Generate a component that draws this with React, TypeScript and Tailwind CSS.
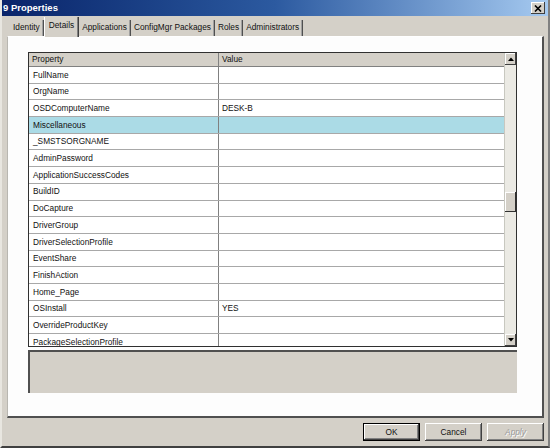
import React from "react";

const rows: [string, string][] = [
  ["FullName", ""],
  ["OrgName", ""],
  ["OSDComputerName", "DESK-B"],
  ["Miscellaneous", ""],
  ["_SMSTSORGNAME", ""],
  ["AdminPassword", ""],
  ["ApplicationSuccessCodes", ""],
  ["BuildID", ""],
  ["DoCapture", ""],
  ["DriverGroup", ""],
  ["DriverSelectionProfile", ""],
  ["EventShare", ""],
  ["FinishAction", ""],
  ["Home_Page", ""],
  ["OSInstall", "YES"],
  ["OverrideProductKey", ""],
  ["PackageSelectionProfile", ""],
];

const tabs = ["Identity", "Details", "Applications", "ConfigMgr Packages", "Roles", "Administrators"];

function Tab({ label, selected }: { label: string; selected: boolean }) {
  if (selected) {
    return (
      <div className="h-[20px] -mb-[1px] px-[4px] flex items-center bg-[#d4d0c8] border-l border-white border-r border-r-[#404040] shadow-[inset_-1px_0_#808080] relative z-10">
        <span className="-mt-[3px]">{label}</span>
      </div>
    );
  }
  return (
    <div className="h-[16px] px-[3px] flex items-center border-r border-r-[#505050] shadow-[inset_-1px_0_#a0a0a0]">
      <span className="-mt-[1px]">{label}</span>
    </div>
  );
}

function Btn({ label, def, disabled }: { label: string; def?: boolean; disabled?: boolean }) {
  return (
    <div
      className={
        "h-[18px] flex items-center justify-center bg-[#d4d0c8] " +
        (def
          ? "w-[57px] border border-black shadow-[inset_-1px_-1px_#404040,inset_1px_1px_#fff,inset_-2px_-2px_#808080]"
          : "w-[57px] shadow-[inset_-1px_-1px_#404040,inset_1px_1px_#fff,inset_-2px_-2px_#808080]")
      }
    >
      <span
        className={
          disabled ? "text-[#9a9a9a] [text-shadow:1px_1px_0_#ffffff] italic" : "text-[#111]"
        }
      >
        {label}
      </span>
    </div>
  );
}

export default function App() {
  return (
    <div
      className="w-[550px] h-[448px] bg-[#d4d0c8] flex flex-col overflow-hidden text-[8.3px] text-[#111] border-b-2 border-b-[#404040] border-r-2 border-r-[#808080] border-l-2 border-l-[#e8e6e0]"
      style={{ fontFamily: '"Liberation Sans", Arial, sans-serif' }}
    >
      {/* Title bar */}
      <div className="h-[16px] shrink-0 flex items-center justify-between pl-[1px] pr-[3px] bg-linear-to-r from-[#0a246a] via-[#2c5aa0] to-[#a6caf0]">
        <span className="text-white font-bold text-[9.5px]">9 Properties</span>
        <div className="w-[14px] h-[12px] bg-[#d4d0c8] flex items-center justify-center shadow-[inset_-1px_-1px_#404040,inset_1px_1px_#fff]">
          <svg width="8" height="7" viewBox="0 0 8 7">
            <path d="M1 0.5 L7 6.5 M7 0.5 L1 6.5" stroke="#000" strokeWidth="1.6" />
          </svg>
        </div>
      </div>

      {/* Tab strip */}
      <div className="h-[20px] shrink-0 flex items-end pl-[8px] text-[8.3px]">
        {tabs.map((t) => (
          <Tab key={t} label={t} selected={t === "Details"} />
        ))}
      </div>

      {/* Panel */}
      <div className="ml-[5px] w-[537px] h-[382px] shrink-0 bg-[#fdfdfd] border-l border-l-[#b8b6b0] border-t border-t-white border-r-2 border-r-[#505050] border-b-2 border-b-[#505050] flex flex-col pt-[15px] pl-[20px]">
        {/* Grid */}
        <div className="w-[489px] h-[295px] border border-[#303030] flex overflow-hidden bg-white">
          <div className="flex-1 flex flex-col overflow-hidden">
            <div className="h-[14px] shrink-0 flex bg-[#d4d0c8] border-b border-b-[#808080]">
              <div className="w-[190px] pl-[3px] flex items-center border-r border-r-[#808080]">Property</div>
              <div className="flex-1 pl-[3px] flex items-center">Value</div>
            </div>
            {rows.map(([k, v]) => (
              <div
                key={k}
                className={
                  "h-[16.7px] shrink-0 flex border-b border-b-[#a8a8a8] " +
                  (k === "Miscellaneous" ? "bg-[#abdbe6]" : "")
                }
              >
                <div className="w-[190px] pl-[4px] flex items-center border-r border-r-[#808080]">{k}</div>
                <div className="flex-1 pl-[3px] flex items-center">{v}</div>
              </div>
            ))}
          </div>
          {/* Scrollbar */}
          <div className="w-[12px] shrink-0 bg-[#ebeae4] flex flex-col border-l border-l-[#c8c8c0]">
            <div className="h-[12px] shrink-0 bg-[#d4d0c8] flex items-center justify-center shadow-[inset_-1px_-1px_#404040,inset_1px_1px_#fff]">
              <svg width="6" height="4" viewBox="0 0 6 4">
                <path d="M0 4 L3 0.5 L6 4 Z" fill="#000" />
              </svg>
            </div>
            <div className="h-[127px] shrink-0" />
            <div className="h-[20px] shrink-0 bg-[#d4d0c8] shadow-[inset_-1px_-1px_#303030,inset_1px_1px_#fff]" />
            <div className="flex-1" />
            <div className="h-[12px] shrink-0 bg-[#d4d0c8] flex items-center justify-center shadow-[inset_-1px_-1px_#404040,inset_1px_1px_#fff]">
              <svg width="6" height="4" viewBox="0 0 6 4">
                <path d="M0 0 L3 3.5 L6 0 Z" fill="#000" />
              </svg>
            </div>
          </div>
        </div>
        {/* Description box */}
        <div className="mt-[3px] w-[489px] h-[43px] bg-[#d4d0c8] border-t-2 border-l-2 border-t-[#505050] border-l-[#505050]" />
      </div>

      {/* Footer */}
      <div className="flex justify-end gap-[5px] pt-[5px] pr-[4px]">
        <Btn label="OK" def />
        <Btn label="Cancel" />
        <Btn label="Apply" disabled />
      </div>
    </div>
  );
}
